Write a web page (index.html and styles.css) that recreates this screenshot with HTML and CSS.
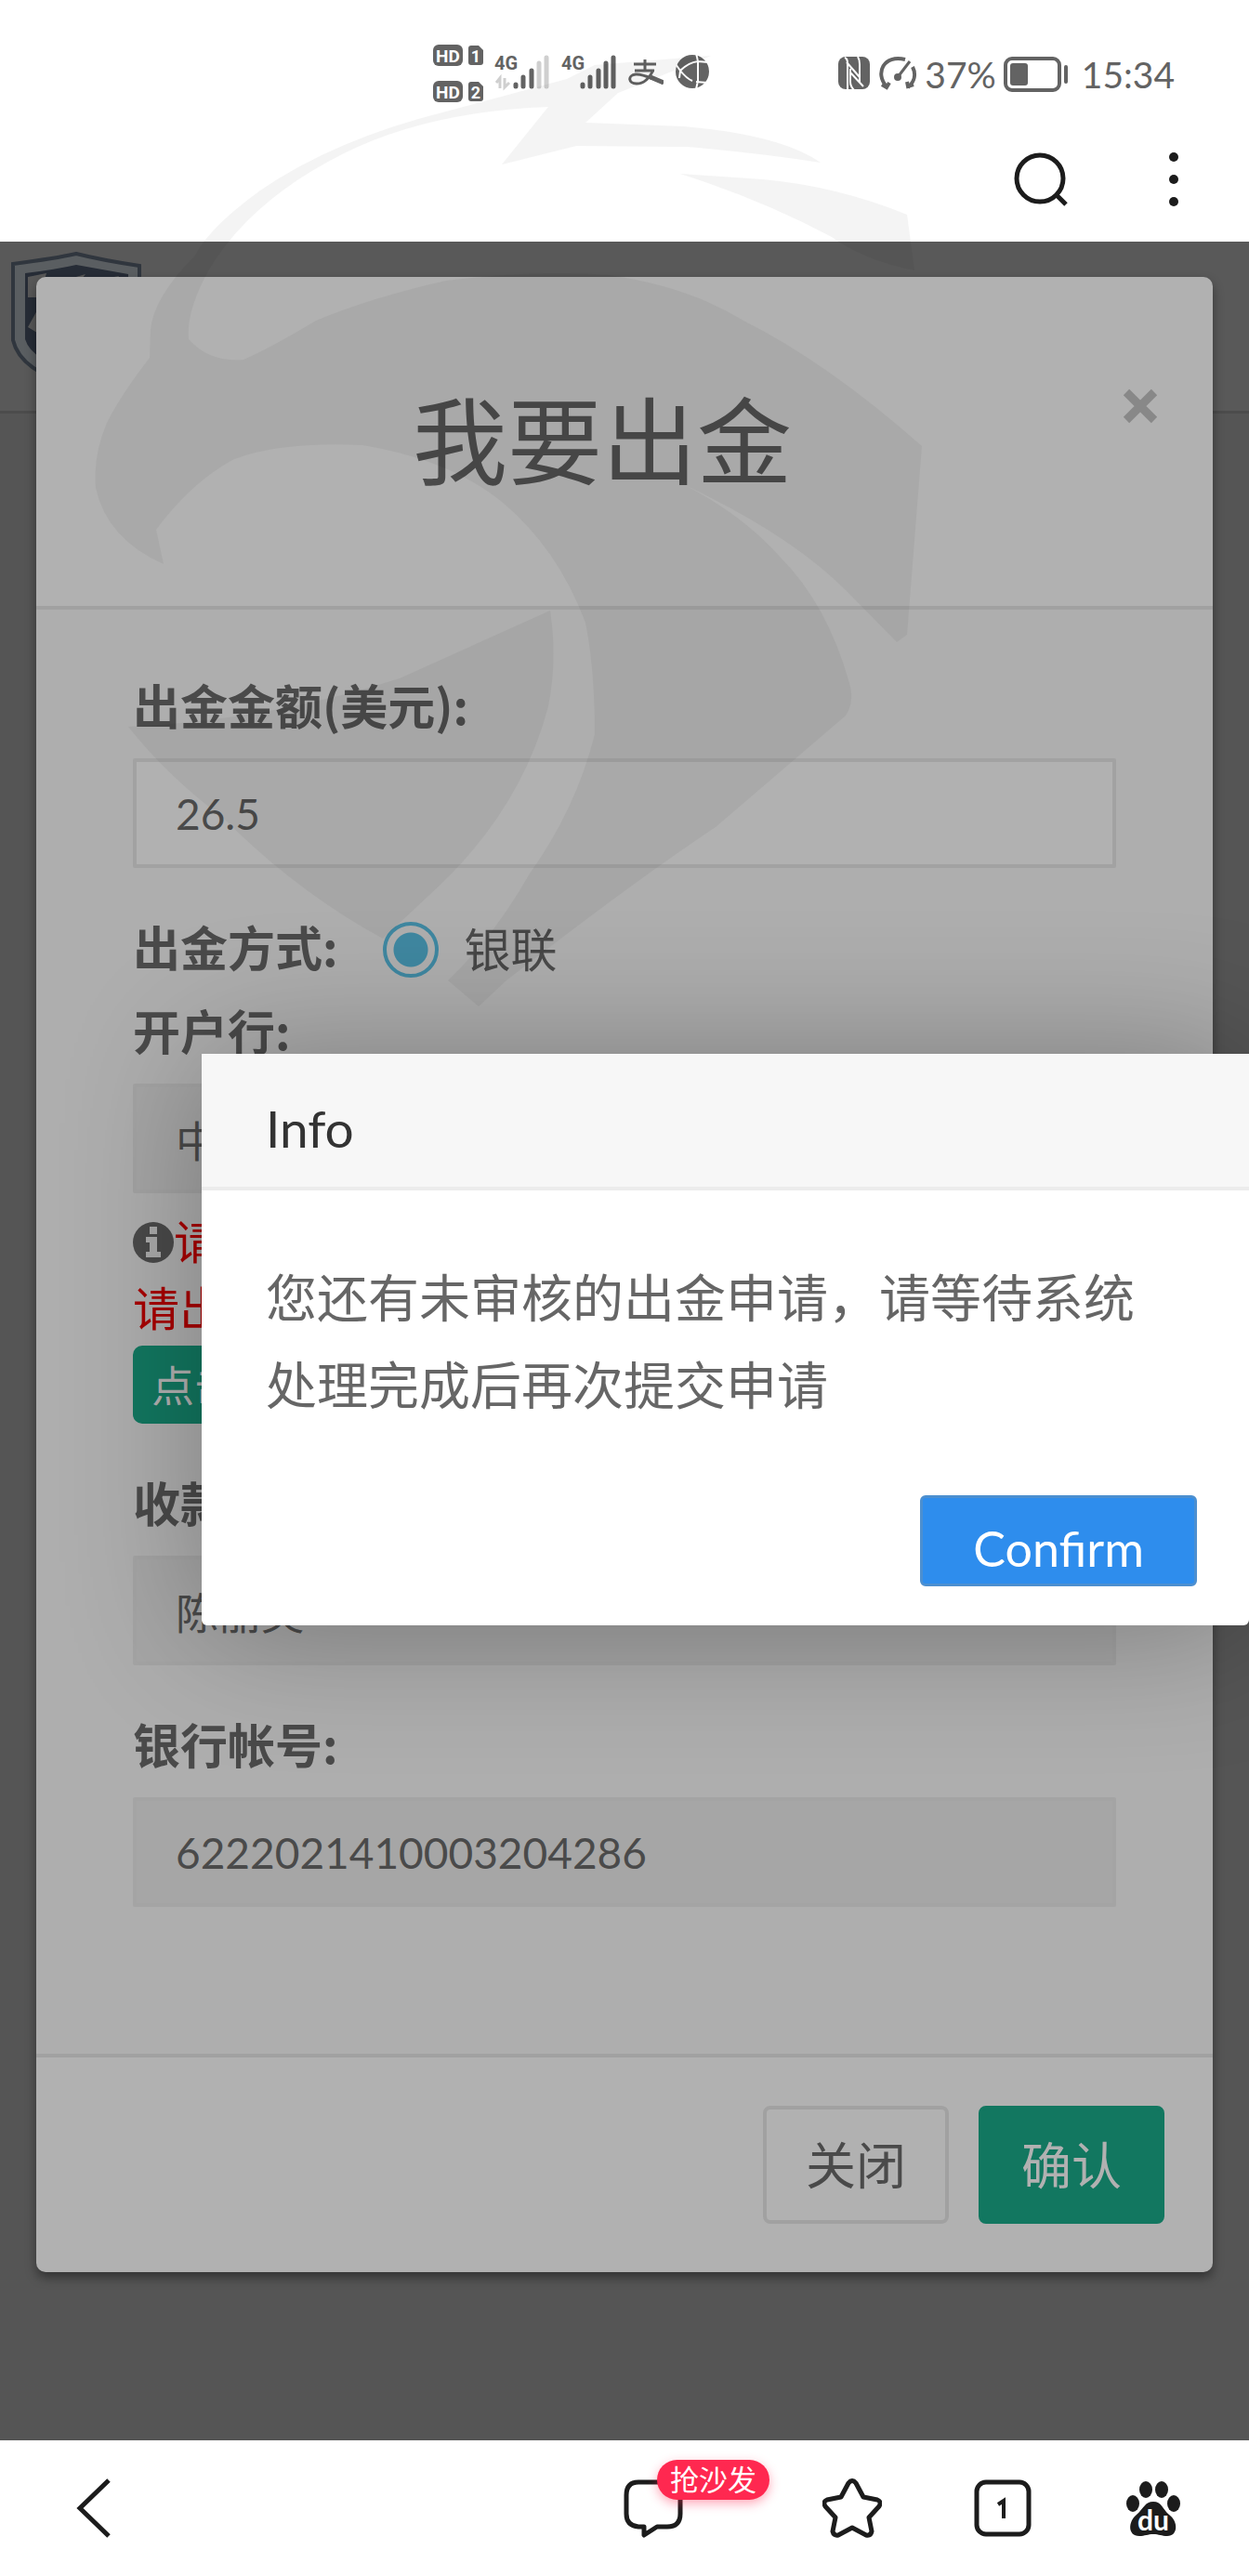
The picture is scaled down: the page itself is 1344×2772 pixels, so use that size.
FILE: index.html
```html
<!DOCTYPE html>
<html lang="zh-CN">
<head>
    <meta charset="UTF-8">
    <meta name="viewport" content="width=device-width, initial-scale=1.0">
    <title>我要出金</title>
    <link rel="stylesheet" href="styles.css">
</head>
<body>
    <div class="status-bar">
        <div class="status-icons">
            <svg width="54" height="64" viewBox="0 0 54 64">
                <rect x="0" y="1" width="32" height="23" rx="6" fill="#636363"/>
                <path d="M38 5q0-3 3-3h8l5 5v13q0 3-3 3h-10q-3 0-3-3z" fill="#636363"/>
                <rect x="0" y="40" width="32" height="23" rx="6" fill="#636363"/>
                <path d="M38 44q0-3 3-3h8l5 5v13q0 3-3 3h-10q-3 0-3-3z" fill="#636363"/>
                <g fill="#fff" font-family="Roboto, sans-serif" font-weight="bold" font-size="19" text-anchor="middle">
                    <text x="16" y="20">HD</text>
                    <text x="46" y="20" font-size="18">1</text>
                    <text x="16" y="59">HD</text>
                    <text x="46" y="59" font-size="18">2</text>
                </g>
            </svg>
            <svg width="60" height="64" viewBox="0 0 60 64">
                <text x="0" y="28" class="net">4G</text>
                <g stroke="#636363" stroke-width="5" stroke-linecap="round">
                    <path d="M23 44v2M31 36v10M40 29v17"/>
                    <path stroke="#cfcfcf" d="M48 21v25M56 15v31"/>
                </g>
                <path d="M6 48V37l-4 5M11 37v10l5-5" fill="none" stroke="#cfcfcf" stroke-width="3"/>
            </svg>
            <svg width="60" height="64" viewBox="0 0 60 64">
                <text x="0" y="28" class="net">4G</text>
                <path d="M23 44v2M31 36v10M40 29v17M48 21v25M56 15v31" stroke="#636363" stroke-width="5" stroke-linecap="round"/>
            </svg>
            <svg width="38" height="64" viewBox="0 0 38 64" fill="none" stroke="#636363" stroke-width="3">
                <path d="M6 22h24M18 17v12M7 29h21M27 28c-4 9-10 15-18 15-9 0-10-9-1-10 8-1 17 5 30 9"/>
                <path d="M24 36l14 6" stroke-width="5"/>
            </svg>
            <svg width="38" height="64" viewBox="0 0 38 64">
                <circle cx="19" cy="30" r="18" fill="#636363"/>
                <path d="M23 10l2 9v21l-2 9M1 22l5 7M5 37l1-8M6 29C11 24 17 20 25 19l11 1M6 29c4 5 8 9 13 11M23 41l12 1" fill="none" stroke="#fff" stroke-width="2"/>
            </svg>
        </div>
        <div class="status-right">
            <svg width="36" height="64" viewBox="0 0 36 64">
                <rect x="1" y="14" width="34" height="35" rx="8" fill="#636363"/>
                <path d="M8 15q3 1 3 6v29M10 20l14 16V22q0-5-2-8M24 36v5M14 27v14q0 5 4 9M14 31l14 15" fill="none" stroke="#fff" stroke-width="2"/>
            </svg>
            <svg width="42" height="64" viewBox="0 0 42 64" fill="none" stroke="#636363" stroke-width="4">
                <path d="M9 46C-4 32 6 11 29 17M37 25c4 8 2 16-5 22M4 44l5 3 3-5M38 44l-6 2-1-5"/>
                <path d="M34 19L21 36" stroke-width="3"/>
                <circle cx="21" cy="36" r="2" fill="#636363"/>
            </svg>
            <span>37%</span>
            <svg class="battery" width="70" height="64" viewBox="0 0 70 64">
                <rect x="2" y="16" width="58" height="34" rx="7" fill="none" stroke="#636363" stroke-width="4"/>
                <rect x="7" y="21" width="19" height="24" rx="3" fill="#636363"/>
                <path d="M67 25v16" stroke="#636363" stroke-width="4" stroke-linecap="round"/>
            </svg>
            <span>15:34</span>
        </div>
    </div>

    <div class="toolbar">
        <button class="icon-button" aria-label="搜索">
            <svg width="64" height="64" viewBox="0 0 64 64" fill="none" stroke="#1c1c1c" stroke-width="5">
                <circle cx="30" cy="31" r="25"/>
                <path d="M47 48l11 11"/>
            </svg>
        </button>
        <button class="icon-button" aria-label="更多">
            <svg width="64" height="64" viewBox="0 0 64 64" fill="#1c1c1c">
                <circle cx="32" cy="8" r="5"/>
                <circle cx="32" cy="32" r="5"/>
                <circle cx="32" cy="56" r="5"/>
            </svg>
        </button>
    </div>

    <main class="page">
        <div class="navbar">
            <svg width="160" height="183" viewBox="0 0 160 183">
                <path d="M14 24Q60 18 82 13Q110 20 150 26V108Q140 135 82 155Q22 140 14 106z" fill="#5a5e61" stroke="#30363e" stroke-width="4"/>
                <path d="M27 34Q60 30 82 25Q110 30 138 35V105Q130 128 82 140Q34 128 27 105z" fill="#262c36"/>
                <path d="M30 60V38l20-4-8 26zM75 40l17-5-14 18zM112 40l16-3-8 16zM30 92l10-18v24z" fill="#585858"/>
            </svg>
        </div>

        <form class="modal" onsubmit="return false">
            <div class="modal-header">
                <h1>我要出金</h1>
                <button type="button" class="close" aria-label="关闭">
                    <svg width="40" height="40" viewBox="0 0 40 40"><path d="M5 5l30 30M35 5L5 35" stroke="#888" stroke-width="9"/></svg>
                </button>
            </div>
            <div class="modal-body">
                <div class="form-group">
                    <label for="amount">出金金额(美元):</label>
                    <input type="text" id="amount" class="field" value="26.5">
                </div>
                <div class="method">
                    <span class="method-title">出金方式:</span>
                    <input type="radio" id="unionpay" name="method" checked>
                    <label for="unionpay">银联</label>
                </div>
                <div class="form-group">
                    <label for="bank">开户行:</label>
                    <input type="text" id="bank" class="field" value="中国银行" disabled>
                    <p class="hint">
                        <svg width="44" height="44" viewBox="0 0 44 44"><circle cx="22" cy="22" r="22" fill="#4a4a4a"/><path d="M18 5h8v8h-8zM14 16h12v16h4v6H14v-6h4V22h-4z" fill="#aaa"/></svg>请看<br>请出
                    </p>
                    <button type="button" class="btn-small">点击</button>
                </div>
                <div class="form-group">
                    <label for="payee">收款人姓名:</label>
                    <input type="text" id="payee" class="field" value="陈丽英" disabled>
                </div>
                <div class="form-group">
                    <label for="account">银行帐号:</label>
                    <input type="text" id="account" class="field" value="6222021410003204286" disabled>
                </div>
            </div>
            <div class="modal-footer">
                <button type="button" class="btn">关闭</button>
                <button type="submit" class="btn btn-primary">确认</button>
            </div>
        </form>

        <div class="dialog" role="dialog" aria-labelledby="dialog-title">
            <h2 id="dialog-title">Info</h2>
            <p>您还有未审核的出金申请，请等待系统处理完成后再次提交申请</p>
            <div class="dialog-footer">
                <button type="button" class="confirm">Confirm</button>
            </div>
        </div>
    </main>

    <nav class="bottom-bar">
        <button class="icon-button back" aria-label="返回">
            <svg width="64" height="64" viewBox="0 0 64 64" fill="none" stroke="#1c1c1c" stroke-width="5"><path d="M46 2L15 32l31 30"/></svg>
        </button>
        <button class="icon-button comment" aria-label="评论">
            <svg width="64" height="64" viewBox="0 0 64 64" fill="none" stroke="#1c1c1c" stroke-width="5" stroke-linejoin="round"><path d="M16 4h31q14 0 14 14v20q0 14-14 14H36l-14 9v-9h-6Q3 51 3 38V18Q3 4 16 4z"/></svg>
            <span class="badge">抢沙发</span>
        </button>
        <button class="icon-button" aria-label="收藏">
            <svg width="64" height="64" viewBox="0 0 64 64" fill="none" stroke="#1c1c1c" stroke-width="5" stroke-linejoin="round"><path d="M28 5q4-5 8 0l8 15 15 3q5 2 2 7L50 42l3 15q-1 5-6 4l-15-8-15 8q-5 1-6-4l3-15L3 30q-3-5 2-7l15-3z"/></svg>
        </button>
        <button class="icon-button" aria-label="标签页">
            <svg width="64" height="64" viewBox="0 0 64 64" fill="none" stroke="#1c1c1c" stroke-width="5">
                <rect x="4" y="4" width="56" height="56" rx="10"/>
                <path d="M27 28l6-4v19" stroke-width="4"/>
            </svg>
        </button>
        <button class="icon-button" aria-label="百度">
            <svg width="64" height="64" viewBox="0 0 64 64" fill="#1c1c1c">
                <ellipse cx="24" cy="12" rx="7" ry="9"/>
                <ellipse cx="41" cy="12" rx="7" ry="9"/>
                <ellipse cx="10" cy="27" rx="7" ry="9"/>
                <ellipse cx="54" cy="27" rx="7" ry="9"/>
                <path d="M32 25c9 0 10 8 17 14 10 7 10 23-2 23-6 0-9-2-15-2s-9 2-15 2C4 62 5 46 14 39c8-7 9-14 18-14z"/>
                <text x="32" y="56" fill="#fff" font-family="Lato, sans-serif" font-weight="bold" font-size="30" text-anchor="middle">du</text>
            </svg>
        </button>
    </nav>

    <!-- eagle emblem over the page, under the dialog -->
    <svg class="emblem" viewBox="0 0 1344 1140" preserveAspectRatio="xMidYMin meet">
        <path d="M765 60L640 70L610 85L480 120Q360 150 280 205Q225 245 210 275Q165 320 162 355L161 385Q130 425 115 455Q100 490 103 525Q115 580 176 607L168 570Q205 520 250 495Q300 475 390 479Q485 495 540 540Q600 590 630 670Q640 720 640 790Q620 870 570 940Q530 1010 482 1055L515 1083L545 1055Q680 950 770 890L910 770Q920 755 914 735Q890 650 840 600Q800 555 737 522Q850 575 910 635L965 691L976 683L992 480Q890 390 800 345Q740 308 655 296Q580 290 480 302Q400 320 340 345Q290 375 262 387Q225 390 203 365Q200 335 225 290Q270 215 370 165Q460 120 590 115L540 177L620 157L740 158Q820 165 883 175Q840 145 735 136L630 132L665 100Z"/>
        <path d="M732 187L820 193Q900 200 976 231L984 291Q930 280 895 255Q820 215 732 187Z"/>
        <path d="M592 657L430 730Q290 775 138 782Q180 835 240 880Q320 960 412 1010L460 965Q560 875 590 760Q600 710 592 657Z"/>
    </svg>
</body>
</html>
```

FILE: styles.css
```css
* {
    box-sizing: border-box;
}

body {
    margin: 0;
    min-height: 100vh;
    display: flex;
    flex-direction: column;
    position: relative;
    background: #fff;
    color: #4a4a4a;
    font-family: Lato, "Noto Sans CJK SC", sans-serif;
    font-size: 50px;
}

button, input {
    font-family: inherit;
}

h1, h2, p {
    margin: 0;
    font-weight: normal;
}

svg {
    display: block;
    flex: none;
}

/* Phone status bar */
.status-bar {
    height: 128px;
    padding: 0 80px 0 466px;
    display: flex;
    justify-content: space-between;
    color: #636363;
    font-size: 39px;
    line-height: 66px;
}

.status-icons {
    display: flex;
    gap: 12px;
    padding-top: 47px;
}

.status-right {
    display: flex;
    gap: 8px;
    padding-top: 47px;
}

.battery {
    margin-right: 6px;
}

.net {
    fill: #636363;
    font-family: Roboto, sans-serif;
    font-size: 20px;
    font-weight: bold;
}

/* Browser toolbar */
.toolbar {
    height: 132px;
    padding: 33px 49px 0 0;
    display: flex;
    justify-content: flex-end;
    gap: 78px;
}

.icon-button {
    border: 0;
    padding: 0;
    background: none;
    position: relative;
}

.toolbar .icon-button {
    height: 64px;
}

/* Page with the withdrawal form */
.page {
    flex: 1;
    position: relative;
    overflow: hidden;
    padding: 38px 39px 178px;
    background: #555;
}

.navbar {
    position: absolute;
    top: 0;
    left: 0;
    right: 0;
    height: 185px;
    background: #595959;
    border-bottom: 3px solid #4c4c4c;
}

.modal {
    position: relative;
    background: #b1b1b1;
    border-radius: 10px;
    box-shadow: 0 6px 12px rgba(0, 0, 0, 0.4);
}

.modal-header {
    position: relative;
    height: 358px;
    padding-right: 48px;
    display: flex;
    align-items: center;
    justify-content: center;
    border-bottom: 4px solid #a1a1a1;
}

.modal-header h1 {
    font-size: 102px;
    line-height: 112px;
}

.close {
    position: absolute;
    top: 119px;
    right: 58px;
    border: 0;
    padding: 0;
    background: none;
}

.modal-body {
    padding: 70px 104px 106px;
    background: #aeaeae;
}

.form-group {
    margin-bottom: 52px;
}

.form-group label {
    display: block;
    margin-bottom: 26px;
    font-family: "Noto Sans CJK SC", sans-serif;
    font-size: 51px;
    font-weight: bold;
    line-height: 64px;
}

.field {
    display: block;
    width: 100%;
    height: 118px;
    padding: 0 42px;
    border: 4px solid #a2a2a2;
    border-radius: 2px;
    background: #b1b1b1;
    color: #4a4a4a;
    font-size: 46px;
}

.field:disabled {
    background: #a6a6a6;
    border-color: #a4a4a4;
}

.method {
    display: flex;
    align-items: center;
    margin-bottom: 18px;
    line-height: 72px;
}

.method-title {
    padding-bottom: 8px;
    font-family: "Noto Sans CJK SC", sans-serif;
    font-size: 51px;
    font-weight: bold;
    line-height: 64px;
}

.method input {
    appearance: none;
    width: 60px;
    height: 60px;
    margin: 0 28px 0 48px;
    border: 4px solid #3f87a0;
    border-radius: 50%;
    background: radial-gradient(circle, #3f87a0 18px, transparent 19px);
}

.hint {
    margin-top: 16px;
    color: #a80000;
    line-height: 72px;
}

.hint svg {
    display: inline-block;
    vertical-align: -4px;
}

.btn-small {
    display: block;
    height: 84px;
    margin-top: 4px;
    padding: 0 20px 4px;
    border: 0;
    border-radius: 10px;
    background: #127760;
    color: #b1b1b1;
    font-size: 46px;
}

.modal-footer {
    display: flex;
    justify-content: flex-end;
    gap: 32px;
    padding: 52px;
    border-top: 4px solid #a1a1a1;
}

.btn {
    height: 127px;
    padding: 0 42px 4px;
    border: 4px solid #a1a1a1;
    border-radius: 8px;
    background: #b1b1b1;
    color: #4a4a4a;
    font-size: 54px;
}

.btn-primary {
    border-color: #127760;
    background: #127760;
    color: #b1b1b1;
}

/* Message dialog */
.dialog {
    position: absolute;
    top: 874px;
    left: 217px;
    right: 0;
    z-index: 2;
    background: #fff;
    border-radius: 6px;
    box-shadow: 3px 3px 150px rgba(0, 0, 0, 0.3);
}

.dialog h2 {
    height: 147px;
    padding: 14px 69px 0;
    border-bottom: 4px solid #ececec;
    background: #f7f7f7;
    color: #333;
    font-size: 55px;
    line-height: 133px;
}

.dialog p {
    padding: 68px 69px 72px;
    color: #666;
    font-size: 55px;
    line-height: 94px;
}

.dialog-footer {
    display: flex;
    justify-content: flex-end;
    padding: 0 56px 42px;
}

.confirm {
    height: 98px;
    padding: 16px 54px 0;
    border: 3px solid #4c8fd0;
    border-radius: 6px;
    background: #2e8ded;
    color: #fff;
    font-size: 52px;
    line-height: 76px;
}

/* Bottom navigation */
.bottom-bar {
    height: 146px;
    padding: 0 71px;
    display: flex;
    align-items: center;
    gap: 98px;
}

.back {
    margin-right: auto;
}

.comment {
    margin-right: 52px;
}

.badge {
    position: absolute;
    top: -20px;
    left: 36px;
    padding: 0 14px;
    border-radius: 22px;
    background: #ff2850;
    box-shadow: 0 4px 12px rgba(255, 40, 80, 0.4);
    color: #fff;
    font-size: 31px;
    line-height: 43px;
    white-space: nowrap;
}

.emblem {
    position: absolute;
    top: 0;
    left: 0;
    width: 100%;
    fill: #000;
    opacity: 0.04;
    pointer-events: none;
}
```
